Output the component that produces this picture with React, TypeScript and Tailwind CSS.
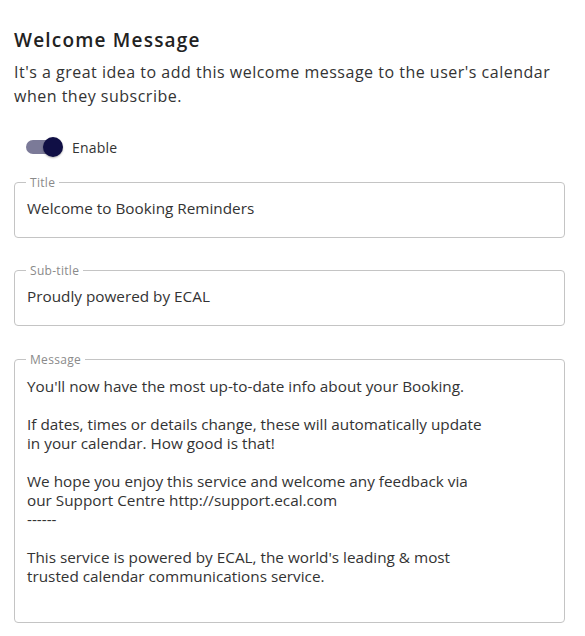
import React from "react";

const font = { fontFamily: '"Open Sans", "Liberation Sans", sans-serif' };

type FieldProps = {
  label: string;
  children: React.ReactNode;
  className?: string;
};

function OutlinedField({ label, children, className }: FieldProps) {
  return (
    <fieldset className={"rounded-[4px] border border-[#c4c4c4] px-[12px] " + (className ?? "")}>
      <legend className="ml-[-1px] px-[4px] text-[12px] leading-[13px] tracking-[0.3px] text-[#8a8a8a]">{label}</legend>
      {children}
    </fieldset>
  );
}

const message = `You'll now have the most up-to-date info about your Booking.

If dates, times or details change, these will automatically update in your calendar. How good is that!

We hope you enjoy this service and welcome any feedback via our Support Centre http://support.ecal.com
------

This service is powered by ECAL, the world's leading & most trusted calendar communications service.`;

export default function App() {
  return (
    <div className="w-[585px] h-[636px] bg-white pl-[14px] pr-[20px] pt-[28px] text-[#333]" style={font}>
      <h2 className="text-[19px] leading-6 font-semibold tracking-[1.2px] text-[#222]">Welcome Message</h2>
      <p className="mt-[8px] text-[16px] leading-6 tracking-[0.5px] text-[#333]">
        It's a great idea to add this welcome message to the user's calendar when they subscribe.
      </p>

      <div className="mt-[27px] flex h-6 items-center pl-[12px]">
        <div className="relative h-[20px] w-[37px]">
          <div className="mt-[3px] h-[14px] w-[34px] rounded-full bg-[#7b7a98]" />
          <div className="absolute left-[17px] top-0 h-[20px] w-[20px] rounded-full bg-[#100f45] shadow-[0_1px_2px_rgba(0,0,0,0.3)]" />
        </div>
        <span className="ml-[9px] text-[14px] tracking-[0.2px] text-[#333]">Enable</span>
      </div>

      <OutlinedField label="Title" className="mt-[17px]">
        <div className="pt-[7px] pb-[17px] text-[15.3px] leading-6">Welcome to Booking Reminders</div>
      </OutlinedField>

      <OutlinedField label="Sub-title" className="mt-[26px]">
        <div className="pt-[7px] pb-[17px] text-[15.3px] leading-6">Proudly powered by ECAL</div>
      </OutlinedField>

      <OutlinedField label="Message" className="mt-[27px]">
        <div className="w-[462px] whitespace-pre-line pt-[11px] pb-[36px] text-[15.3px] leading-[19px]">{message}</div>
      </OutlinedField>
    </div>
  );
}
